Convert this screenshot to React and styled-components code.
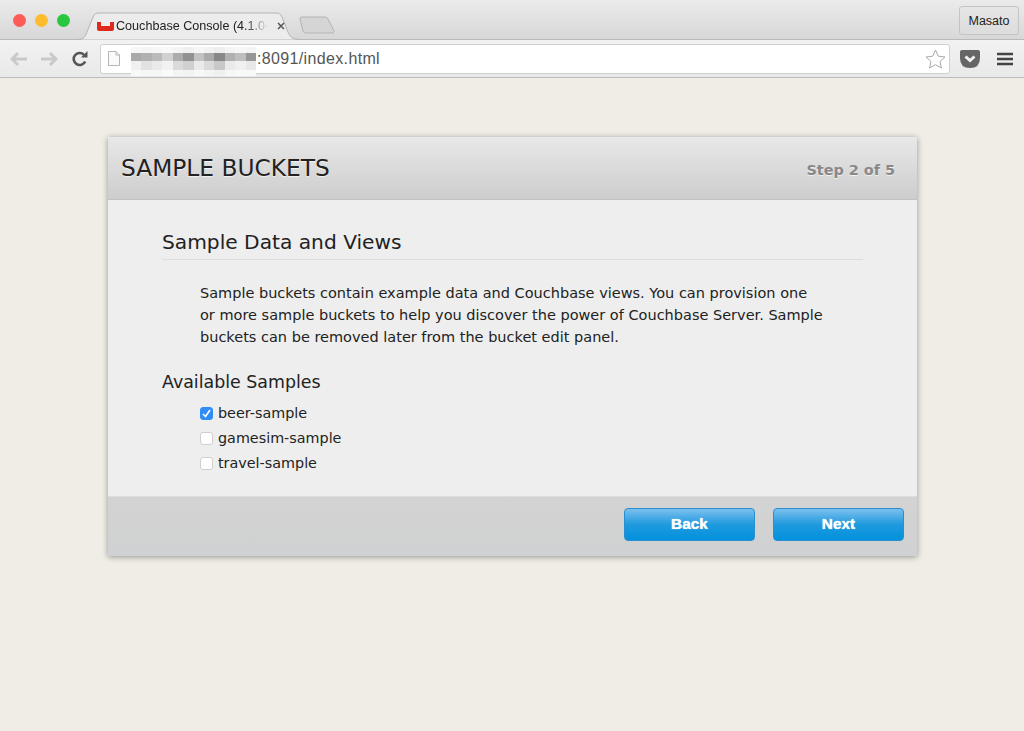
import React from 'react'
import styled, { createGlobalStyle } from 'styled-components'

const GlobalStyle = createGlobalStyle`
  html, body { margin: 0; padding: 0; height: 100%; background: #f0ede6; }
  #root { height: 100%; }
  * { box-sizing: border-box; }
`

const Page = styled.div`
  width: 1024px;
  height: 731px;
  overflow: hidden;
  display: flex;
  flex-direction: column;
  background: #f0ede6;
  font-family: 'DejaVu Sans', Verdana, sans-serif;
`

const TabStrip = styled.div`
  height: 40px;
  flex: none;
  display: flex;
  align-items: flex-end;
  padding-left: 13px;
  background: linear-gradient(#ebebeb, #d7d7d7);
  border-bottom: 1px solid #b9b9b9;
`

const Lights = styled.div`
  display: flex;
  gap: 9px;
  align-self: flex-start;
  margin-top: 14px;
`

const Light = styled.span`
  width: 13px;
  height: 13px;
  border-radius: 50%;
  background: ${({ color }) => color};
`

const Tab = styled.div`
  position: relative;
  width: 222px;
  height: 28px;
  margin: 0 0 -1px 8px;
  padding: 0 0 0 19px;
  display: flex;
  align-items: center;
  gap: 2px;
  font: 12px 'Liberation Sans', Arial, sans-serif;
  color: #222;
`

const TabShape = styled.svg`
  position: absolute;
  left: 0;
  top: 0;
`

const TabTitle = styled.span`
  position: relative;
  width: 153px;
  white-space: nowrap;
  font-size: 12.6px;
  -webkit-mask-image: linear-gradient(90deg, #000 128px, transparent 153px);
  mask-image: linear-gradient(90deg, #000 128px, transparent 153px);
`

const TabClose = styled.svg`
  position: relative;
  margin-left: 6px;
`

const Favicon = styled.svg`
  position: relative;
  flex: none;
`

const NewTab = styled.svg`
  margin: 0 0 5px -1px;
  align-self: flex-end;
`

const ProfileButton = styled.div`
  margin: 6px 5px 0 auto;
  align-self: flex-start;
  width: 60px;
  height: 29px;
  display: flex;
  align-items: center;
  justify-content: center;
  border: 1px solid #c4c4c4;
  border-radius: 3px;
  background: linear-gradient(#e6e6e6, #dcdcdc);
  font: 12.5px 'Liberation Sans', Arial, sans-serif;
  color: #222;
`

const Toolbar = styled.div`
  height: 38px;
  flex: none;
  display: flex;
  align-items: center;
  padding: 0 10px;
  background: linear-gradient(#f2f2f2, #e9e9e9);
  border-bottom: 1px solid #bcbcbc;
`

const NavIcon = styled.svg`
  flex: none;
  margin-right: ${({ $gap }) => $gap}px;
`

const Omnibox = styled.div`
  width: 850px;
  height: 30px;
  flex: none;
  display: flex;
  align-items: center;
  padding-left: 7px;
  background: #fff;
  border: 1px solid #d0d0d0;
  border-radius: 3px;
`

const PageIcon = styled.svg`
  flex: none;
`

const Pixelated = styled.div`
  display: grid;
  grid-template-columns: repeat(12, 1fr);
  grid-template-rows: 6px 8px 9px 6px;
  margin: 6px 0 0 11px;
  width: 125px;
  height: 29px;
  flex: none;
  filter: blur(0.6px);
`

const Pixel = styled.span`
  background: rgb(${({ $v }) => `${$v},${$v},${$v}`});
`

const Url = styled.span`
  font: 16px 'Liberation Sans', Arial, sans-serif;
  letter-spacing: 0.35px;
  margin-left: 1px;
  color: #555;
`

const StarIcon = styled.svg`
  margin-left: auto;
  margin-right: 3px;
`

const ToolIcons = styled.div`
  display: flex;
  align-items: center;
  margin-left: 10px;
  gap: 17px;
`

const Content = styled.main`
  flex: 1;
  padding: 59px 0 0 108px;
`

const Card = styled.section`
  width: 809px;
  height: 419px;
  display: flex;
  flex-direction: column;
  background: #eeeeee;
  box-shadow: 0 1px 6px rgba(0, 0, 0, 0.38);
`

const CardHeader = styled.header`
  height: 63px;
  flex: none;
  display: flex;
  align-items: center;
  justify-content: space-between;
  padding: 0 22px 2px 13px;
  background: linear-gradient(#e8e8e8, #cdcdcd);
  border-bottom: 1px solid #c2c2c2;
`

const CardTitle = styled.h1`
  margin: 0;
  font-size: 23.3px;
  font-weight: 400;
  color: #222;
  text-shadow: 0 1px 1px rgba(255, 255, 255, 0.7);
`

const StepLabel = styled.span`
  margin-top: 6px;
  font-size: 14.4px;
  font-weight: 700;
  color: #888;
  text-shadow: 0 1px 1px rgba(255, 255, 255, 0.7);
`

const CardBody = styled.div`
  flex: 1;
  padding: 29px 54px 0;
`

const SectionTitle = styled.h2`
  margin: 0;
  height: 31px;
  font-size: 20.2px;
  line-height: 27px;
  font-weight: 400;
  color: #222;
  border-bottom: 1px solid #dbdddf;
`

const Intro = styled.p`
  margin: 22px 0 0 38px;
  width: 660px;
  font-size: 14.5px;
  line-height: 22px;
  color: #222;
`

const SamplesTitle = styled.h3`
  margin: 22px 0 0;
  font-size: 17.4px;
  line-height: 24px;
  font-weight: 400;
  color: #222;
`

const SampleList = styled.ul`
  list-style: none;
  margin: 9px 0 0 38px;
  padding: 0;
  display: flex;
  flex-direction: column;
  gap: 5px;
`

const SampleRow = styled.li`
  height: 20px;
  display: flex;
  align-items: center;
  gap: 5px;
  font-size: 14.35px;
  color: #222;
`

const Check = styled.span`
  width: 13px;
  height: 13px;
  flex: none;
  display: flex;
  align-items: center;
  justify-content: center;
  border-radius: 3px;
  background: ${({ $on }) => ($on ? '#2f8df5' : '#fff')};
  border: 1px solid ${({ $on }) => ($on ? '#2f8df5' : '#cfcfcf')};
`

const CardFooter = styled.footer`
  height: 60px;
  flex: none;
  display: flex;
  justify-content: flex-end;
  align-items: flex-start;
  gap: 18px;
  padding: 11px 13px 0 0;
  background: linear-gradient(#d3d3d3, #d0d1d2);
  border-top: 1px solid #dcdcdc;
`

const BlueButton = styled.button`
  width: 131px;
  height: 33px;
  padding: 0 0 1px;
  border: 1px solid #2a8fd0;
  border-radius: 4px;
  background: linear-gradient(#7cc0ee, #1f9ade 50%, #0191dc);
  color: #fff;
  font: 700 15.4px 'Liberation Sans', Arial, sans-serif;
  text-shadow: 0 0 1px #fff;
`

const samples = [
  { name: 'beer-sample', on: true },
  { name: 'gamesim-sample', on: false },
  { name: 'travel-sample', on: false },
]

// mosaic over the hidden host name
const mosaic = [
  246, 244, 246, 248, 244, 240, 246, 242, 238, 244, 246, 244,
  170, 176, 186, 208, 172, 146, 194, 170, 136, 176, 190, 150,
  240, 226, 234, 242, 218, 208, 234, 218, 200, 234, 240, 232,
  248, 246, 246, 250, 244, 242, 248, 244, 240, 246, 248, 248,
]

export default function App() {
  return (
    <Page>
      <GlobalStyle />
      <TabStrip>
        <Lights>
          <Light color="#fc5b57" />
          <Light color="#fdbc2e" />
          <Light color="#27c83f" />
        </Lights>
        <Tab>
          <TabShape width="222" height="28" viewBox="0 0 222 28">
            <path
              d="M0 27.5 C6 27 7 25 9 20 L15 5 C16 2 18 1 21 1 H198 C201 1 203 2 204 5 L210 20 C212 25 214 27 222 27.5"
              fill="#ececec"
              stroke="#b5b5b5"
            />
          </TabShape>
          <Favicon width="17" height="10" viewBox="0 0 17 10">
            <path d="M0 1 H4 V5 H13 V1 H17 V8 Q17 10 15 10 H2 Q0 10 0 8 Z" fill="#dd2a1c" />
          </Favicon>
          <TabTitle>Couchbase Console (4.1.0-</TabTitle>
          <TabClose width="8" height="8" viewBox="0 0 8 8">
            <path d="M1 1 L7 7 M7 1 L1 7" stroke="#555" strokeWidth="1.5" />
          </TabClose>
        </Tab>
        <NewTab width="36" height="18" viewBox="0 0 36 18">
          <path d="M1 3 Q0.5 1 3 1 H26 Q28 1 29 3 L34.5 14 Q36 17 33 17 H7 Q5 17 4 15 Z" fill="#d5d5d5" stroke="#b3b3b3" />
        </NewTab>
        <ProfileButton>Masato</ProfileButton>
      </TabStrip>
      <Toolbar>
        <NavIcon $gap={12} width="18" height="16" viewBox="0 0 18 16">
          <path d="M8 2 L2 8 L8 14 M2 8 H17" fill="none" stroke="#c9c9c9" strokeWidth="3" />
        </NavIcon>
        <NavIcon $gap={14} width="18" height="16" viewBox="0 0 18 16">
          <path d="M10 2 L16 8 L10 14 M16 8 H1" fill="none" stroke="#c9c9c9" strokeWidth="3" />
        </NavIcon>
        <NavIcon $gap={12} width="16" height="16" viewBox="0 0 16 16">
          <path d="M13.2 10.5 A6 6 0 1 1 12 3.8" fill="none" stroke="#555" strokeWidth="2.6" />
          <path d="M9 6.5 H15.5 V0 Z" fill="#555" />
        </NavIcon>
        <Omnibox>
          <PageIcon width="12" height="15" viewBox="0 0 12 15">
            <path d="M0.5 0.5 H8 L11.5 4 V14.5 H0.5 Z M8 0.5 V4 H11.5" fill="#fafafa" stroke="#b5b5b5" />
          </PageIcon>
          <Pixelated>
            {mosaic.map((v, i) => (
              <Pixel key={i} $v={v} />
            ))}
          </Pixelated>
          <Url>:8091/index.html</Url>
          <StarIcon width="21" height="20" viewBox="0 0 21 20">
            <path
              d="M10.5 1 L13.3 7.2 L20 8 L15 12.5 L16.4 19 L10.5 15.7 L4.6 19 L6 12.5 L1 8 L7.7 7.2 Z"
              fill="#fff"
              stroke="#a8a8a8"
            />
          </StarIcon>
        </Omnibox>
        <ToolIcons>
          <svg width="20" height="18" viewBox="0 0 20 18">
            <path d="M0 2 Q0 0 2 0 H18 Q20 0 20 2 V8 Q20 18 10 18 Q0 18 0 8 Z" fill="#666" />
            <path d="M5.5 6.5 L10 10.5 L14.5 6.5" fill="none" stroke="#f2f2f2" strokeWidth="3" />
          </svg>
          <svg width="16" height="14" viewBox="0 0 16 14">
            <path d="M0 2 H16 M0 7 H16 M0 12 H16" stroke="#444" strokeWidth="2.6" />
          </svg>
        </ToolIcons>
      </Toolbar>
      <Content>
        <Card>
          <CardHeader>
            <CardTitle>SAMPLE BUCKETS</CardTitle>
            <StepLabel>Step 2 of 5</StepLabel>
          </CardHeader>
          <CardBody>
            <SectionTitle>Sample Data and Views</SectionTitle>
            <Intro>
              Sample buckets contain example data and Couchbase views. You can provision one
              <br />
              or more sample buckets to help you discover the power of Couchbase Server. Sample
              <br />
              buckets can be removed later from the bucket edit panel.
            </Intro>
            <SamplesTitle>Available Samples</SamplesTitle>
            <SampleList>
              {samples.map((s) => (
                <SampleRow key={s.name}>
                  <Check $on={s.on}>
                    {s.on && (
                      <svg width="9" height="9" viewBox="0 0 9 9">
                        <path d="M1 5 L3.5 7.5 L8 1" fill="none" stroke="#fff" strokeWidth="1.6" />
                      </svg>
                    )}
                  </Check>
                  {s.name}
                </SampleRow>
              ))}
            </SampleList>
          </CardBody>
          <CardFooter>
            <BlueButton>Back</BlueButton>
            <BlueButton>Next</BlueButton>
          </CardFooter>
        </Card>
      </Content>
    </Page>
  )
}
